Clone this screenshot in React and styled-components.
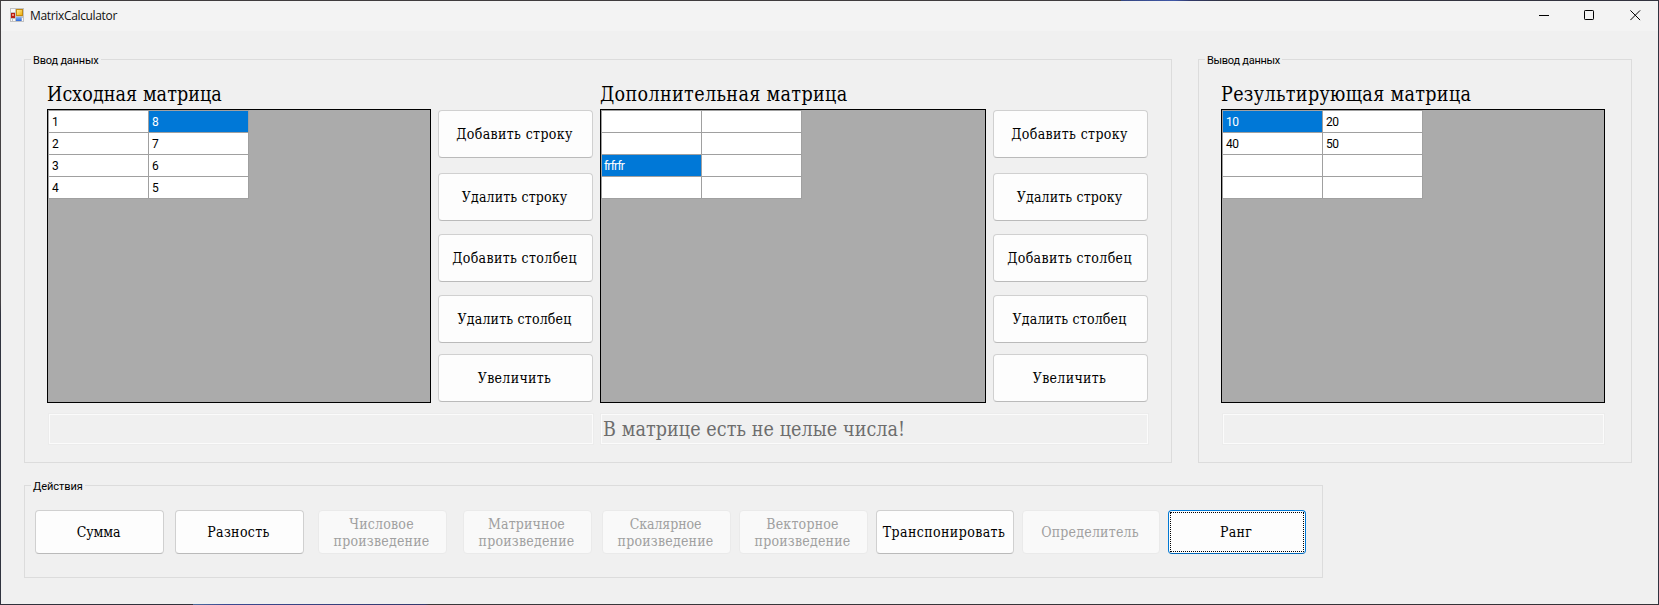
import React from "react";
import styled, { createGlobalStyle, css } from "styled-components";

const GlobalStyle = createGlobalStyle`
  *, *::before, *::after { box-sizing: border-box; }
  body { margin: 0; background: #f0f0f0; }
`;

const serif = `"DejaVu Serif Condensed", "DejaVu Serif", serif`;
const ui = `Roboto, "Liberation Sans", sans-serif`;

const Desktop = styled.div`
  width: 1659px;
  height: 605px;
  padding: 1px;
  background:
    linear-gradient(90deg, #3f3b3d 1121px, #34457f 1121px, #3f58a8 1174px, #30386a 1190px, #30354f 1211px, #32333f 1225px) top / 100% 1px no-repeat,
    linear-gradient(90deg, #31323c 193px, #4d6c9c 193px, #3c4a92 225px, #33396c 425px, #3a383b 429px, #343237 100%) bottom / 100% 1px no-repeat,
    linear-gradient(180deg, #444143 50%, #30333f 52%) left / 1px 100% no-repeat,
    #2f3340;
`;

const Window = styled.main`
  height: 603px;
  background: #f0f0f0;
`;

const TitleBar = styled.header`
  display: flex;
  align-items: center;
  height: 30px;
  padding: 0 17px 0 9px;
  background: #f3f3f3;
`;

const AppIcon = styled.svg`
  width: 14px;
  height: 14px;
  margin-bottom: 2px;
`;

const Title = styled.h1`
  flex: 1;
  margin: 0 0 1px 6px;
  font: 12px/16px "Open Sans", sans-serif;
  letter-spacing: -0.34px;
  color: #111;
`;

const Controls = styled.div`
  display: flex;
  gap: 35px;
  margin-bottom: 1px;
`;

const ControlIcon = styled.svg`
  display: block;
  width: 11px;
  height: 11px;
  fill: none;
  stroke: #000;
`;

const Content = styled.div`
  display: flex;
  flex-direction: column;
  gap: 22px;
  padding: 28px 26px 0 23px;
`;

const TopRow = styled.div`
  display: flex;
  justify-content: space-between;
`;

const Group = styled.section`
  position: relative;
  width: ${(p) => p.$width}px;
  height: ${(p) => p.$height}px;
  border: 1px solid #dcdcdc;
`;

const Legend = styled.h2`
  position: absolute;
  top: -6px;
  left: 6px;
  margin: 0;
  padding: 0 2px;
  background: #f0f0f0;
  font: 11px/14px ${ui};
  letter-spacing: ${(p) => p.$spacing}px;
  color: #000;
`;

const MatrixLayout = styled.div`
  display: grid;
  grid-template-columns: ${(p) => p.$columns};
  grid-template-rows: 49px 294px 30px;
  column-gap: 7px;
  padding-left: 22px;
`;

const MatrixTitle = styled.h3`
  grid-column: span ${(p) => p.$span};
  margin: 0;
  padding-top: 23px;
  font: 19.5px/24px ${serif};
  letter-spacing: ${(p) => p.$spacing}px;
  white-space: nowrap;
  color: #000;
`;

const GridView = styled.div`
  border: 1px solid #000;
  background: #ababab;
`;

const Table = styled.div`
  display: grid;
  grid-template-columns: 99px 99px;
  grid-auto-rows: 21px;
  gap: 1px;
  width: 201px;
  padding: 1px;
  background: #a0a0a0;
`;

const Cell = styled.div`
  padding-left: ${(p) => (p.$tight ? 2 : 3)}px;
  background: ${(p) => (p.$selected ? "#0078d7" : "#fff")};
  color: ${(p) => (p.$selected ? "#fff" : "#000")};
  font: 12px/22px ${ui};
  letter-spacing: ${(p) => (p.$tight ? "-0.8px" : "-0.4px")};
`;

const SideButtons = styled.div`
  padding-top: 1px;
`;

const Button = styled.button`
  display: flex;
  align-items: center;
  justify-content: center;
  padding: 1px 2px 0 0;
  border: 1px solid #d0d0d0;
  border-bottom-color: #bababa;
  border-radius: 4px;
  background: #fdfdfd;
  color: #000;
  font: 14px/17px ${serif};
  white-space: nowrap;
  &:disabled {
    border-color: #eaeaea;
    background: #f9f9f9;
    color: #a0a0a0;
  }
`;

const SideButton = styled(Button)`
  width: 155px;
  height: 48px;
  margin-bottom: ${(p) => p.$after}px;
`;

const ActionButton = styled(Button)`
  width: ${(p) => (p.$wide ? 138 : 129)}px;
  height: 44px;
  margin-left: ${(p) => p.$before}px;
  ${(p) =>
    p.$focused &&
    css`
      padding: 1px;
      border-color: #0078d4 #0078d4 #0067b8;
    `}
`;

const FocusRing = styled.span`
  display: flex;
  align-items: center;
  justify-content: center;
  width: 100%;
  height: 100%;
  padding: 1px 2px 0 0;
  border: 1px dotted #000;
`;

const Lines = styled.span`
  display: flex;
  flex-direction: column;
  align-items: center;
`;

const Label = styled.span`
  letter-spacing: ${(p) => p.$spacing}px;
`;

const Status = styled.output`
  display: block;
  grid-column: span ${(p) => p.$span};
  height: 30px;
  margin: 11px ${(p) => p.$right || 0}px 0 ${(p) => p.$left}px;
  padding-left: 1px;
  border: 1px solid #fbfbfb;
  outline: 1px solid #ececec;
  font: 19.5px/30px ${serif};
  letter-spacing: 0.09px;
  color: #6d6d6d;
`;

const Actions = styled.div`
  display: flex;
  padding: 24px 0 0 10px;
`;

const side = [
  ["Добавить строку", 0.37, 15],
  ["Удалить строку", 0.14, 13],
  ["Добавить столбец", 0.36, 13],
  ["Удалить столбец", 0.18, 11],
  ["Увеличить", 0.32, 0],
];

const actions = [
  { lines: [["Сумма", -0.1]], before: 0 },
  { lines: [["Разность", 0.37]], before: 11 },
  { lines: [["Числовое", 0.22], ["произведение", 0.22]], before: 14, disabled: true },
  { lines: [["Матричное", 0.15], ["произведение", 0.22]], before: 16, disabled: true },
  { lines: [["Скалярное", -0.08], ["произведение", 0.22]], before: 10, disabled: true },
  { lines: [["Векторное", 0.22], ["произведение", 0.22]], before: 8, disabled: true },
  { lines: [["Транспонировать", 0.42]], before: 8, wide: true },
  { lines: [["Определитель", 0.22]], before: 8, wide: true, disabled: true },
  { lines: [["Ранг", 0.3]], before: 8, wide: true, focused: true },
];

function Matrix({ values, selected }) {
  return (
    <GridView>
      <Table>
        {values.map((v, i) => (
          <Cell key={i} $selected={i === selected} $tight={v.length > 2}>
            {v}
          </Cell>
        ))}
      </Table>
    </GridView>
  );
}

function MatrixButtons() {
  return (
    <SideButtons>
      {side.map(([text, spacing, after]) => (
        <SideButton key={text} $after={after}>
          <Label $spacing={spacing}>{text}</Label>
        </SideButton>
      ))}
    </SideButtons>
  );
}

function Action({ lines, before, wide, disabled, focused }) {
  const text = (
    <Lines>
      {lines.map(([t, s]) => (
        <Label key={t} $spacing={s}>{t}</Label>
      ))}
    </Lines>
  );
  return (
    <ActionButton $before={before} $wide={wide} $focused={focused} disabled={disabled}>
      {focused ? <FocusRing>{text}</FocusRing> : text}
    </ActionButton>
  );
}

export default function App() {
  return (
    <Desktop>
      <GlobalStyle />
      <Window>
        <TitleBar>
          <AppIcon viewBox="0 0 14 14">
            <defs>
              <linearGradient id="gold" x1="0" y1="0" x2="1" y2="1">
                <stop offset="0" stopColor="#fff0a0" />
                <stop offset="1" stopColor="#eeaa00" />
              </linearGradient>
              <linearGradient id="azure" x1="0" y1="0" x2="0" y2="1">
                <stop offset="0" stopColor="#86b4f8" />
                <stop offset="1" stopColor="#2e68d8" />
              </linearGradient>
            </defs>
            <rect width="14" height="14" fill="#c2c2c2" />
            <path d="M1 1h4v3H1zM1 11h1v2H1zM3 11h2v2H3zM12 10h1v3h-1z" fill="#f8f8f8" />
            <rect x="6.5" y="1.5" width="6" height="6" fill="url(#gold)" stroke="#c48a10" />
            <rect x="1" y="5" width="4" height="5" fill="#b81c12" />
            <rect x="2" y="6" width="2" height="2" fill="#f08a7c" />
            <rect x="6" y="9" width="5.5" height="4" fill="url(#azure)" />
          </AppIcon>
          <Title>MatrixCalculator</Title>
          <Controls>
            <ControlIcon viewBox="0 0 11 11"><path d="M1 5.5h10" /></ControlIcon>
            <ControlIcon viewBox="0 0 11 11"><rect x="0.5" y="0.5" width="9" height="9" rx="0.7" /></ControlIcon>
            <ControlIcon viewBox="0 0 11 11"><path d="M0.4 0.4l9.7 9.7M10.1 0.4l-9.7 9.7" /></ControlIcon>
          </Controls>
        </TitleBar>
        <Content>
          <TopRow>
            <Group $width={1148} $height={404}>
              <Legend $spacing={-0.2}>Ввод данных</Legend>
              <MatrixLayout $columns="384px 155px 386px 155px">
                <MatrixTitle $span={2} $spacing={0.08}>Исходная матрица</MatrixTitle>
                <MatrixTitle $span={2} $spacing={0.36}>Дополнительная матрица</MatrixTitle>
                <Matrix values={["1", "8", "2", "7", "3", "6", "4", "5"]} selected={1} />
                <MatrixButtons />
                <Matrix values={["", "", "", "", "frfrfr", "", "", ""]} selected={4} />
                <MatrixButtons />
                <Status $span={2} $left={2} />
                <Status $span={2} $left={1}>В матрице есть не целые числа!</Status>
              </MatrixLayout>
            </Group>
            <Group $width={434} $height={404}>
              <Legend $spacing={-0.27}>Вывод данных</Legend>
              <MatrixLayout $columns="384px">
                <MatrixTitle $span={1} $spacing={0.34}>Результирующая матрица</MatrixTitle>
                <Matrix values={["10", "20", "40", "50", "", "", "", ""]} selected={0} />
                <Status $span={1} $left={2} $right={1} />
              </MatrixLayout>
            </Group>
          </TopRow>
          <Group $width={1299} $height={93}>
            <Legend $spacing={-0.05}>Действия</Legend>
            <Actions>
              {actions.map((a, i) => (
                <Action key={i} {...a} />
              ))}
            </Actions>
          </Group>
        </Content>
      </Window>
    </Desktop>
  );
}
